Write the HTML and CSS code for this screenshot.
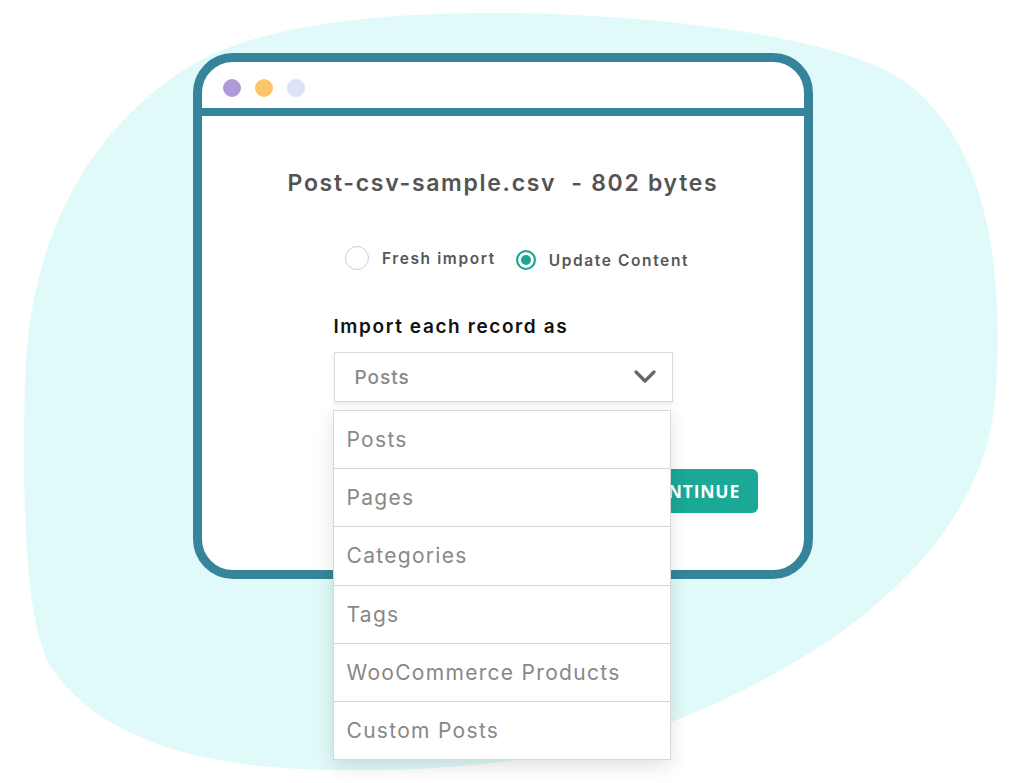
FILE: index.html
```html
<!DOCTYPE html>
<html lang="en">
<head>
    <meta charset="UTF-8">
    <title>CSV import</title>
    <link rel="stylesheet" href="styles.css">
</head>
<body>
    <div class="stage">
        <svg class="blob" width="1024" height="783" viewBox="0 0 1024 783">
            <path d="M512 13 C650 15 850 35 912 87 C990 150 1005 280 995 400 C985 520 880 640 669 723 C560 765 420 772 333 770 C200 768 100 740 50 666 C25 620 22 500 25 383 C28 250 80 130 200 60 C280 20 400 12 512 13 Z" fill="#dffaf8"/>
        </svg>
        <div class="window">
            <div class="titlebar">
                <span class="dot purple"></span>
                <span class="dot yellow"></span>
                <span class="dot blue"></span>
            </div>
            <div class="content">
                <h2 class="file-name">Post-csv-sample.csv &nbsp;- 802 bytes</h2>
                <div class="modes">
                    <label class="radio"><span class="circle"></span>Fresh import</label>
                    <label class="radio checked"><span class="circle"></span>Update Content</label>
                </div>
                <div class="record">
                    <div class="record-label">Import each record as</div>
                    <div class="select">
                        <span>Posts</span>
                        <svg class="chevron" width="22" height="14" viewBox="0 0 22 14">
                            <path d="M2 2 L11 11 L20 2" fill="none" stroke="#666" stroke-width="3.2" stroke-linecap="round" stroke-linejoin="round"/>
                        </svg>
                    </div>
                    <ul class="options">
                        <li>Posts</li>
                        <li>Pages</li>
                        <li>Categories</li>
                        <li>Tags</li>
                        <li>WooCommerce Products</li>
                        <li>Custom Posts</li>
                    </ul>
                </div>
                <div class="actions">
                    <button class="continue">CONTINUE</button>
                </div>
            </div>
        </div>
    </div>
</body>
</html>
```
FILE: styles.css
```css
body {
    margin: 0;
    background: #fff;
    font-family: 'Inter', 'Open Sans', sans-serif;
}
.stage {
    position: relative;
    width: 1024px;
    height: 783px;
    padding-top: 53px;
    box-sizing: border-box;
    overflow: hidden;
}
.blob {
    position: absolute;
    left: 0;
    top: 0;
}
.window {
    position: relative;
    margin-left: 193px;
    width: 620px;
    box-sizing: border-box;
    border: 9px solid #36849b;
    border-radius: 40px;
    background: #fff;
}
.titlebar {
    height: 54px;
    box-sizing: border-box;
    padding: 17px 0 0 21px;
    border-bottom: 8px solid #36849b;
    display: flex;
    gap: 14px;
}
.dot {
    width: 18px;
    height: 18px;
    border-radius: 50%;
}
.dot.purple { background: #b09bd8; }
.dot.yellow { background: #fcc76a; }
.dot.blue { background: #dbe2f8; }
.content {
    padding: 52px 0 57px 0;
}
.file-name {
    margin: 0;
    text-align: center;
    font-size: 23px;
    line-height: 30px;
    font-weight: 600;
    color: #545454;
    letter-spacing: 1.7px;
}
.modes {
    margin-top: 47px;
    height: 26px;
    display: flex;
    justify-content: center;
    align-items: center;
    gap: 20px;
    padding-left: 28px;
}
.radio {
    display: flex;
    align-items: center;
    gap: 13px;
    font-size: 15.5px;
    font-weight: 600;
    color: #575757;
    letter-spacing: 1.6px;
}
.circle {
    width: 22px;
    height: 22px;
    border: 1px solid #cfcfcf;
    border-radius: 50%;
    box-sizing: content-box;
}
.radio.checked .circle {
    width: 16px;
    height: 16px;
    border: 2.5px solid #1ea596;
    background: #1ea596;
    box-shadow: inset 0 0 0 3px #fff;
}
.radio.checked {
    margin-top: 4px;
}
.record {
    position: relative;
    width: 339px;
    margin: 44px auto 0 auto;
}
.record-label {
    font-size: 19px;
    line-height: 24px;
    font-weight: 600;
    color: #111;
    letter-spacing: 1.6px;
}
.select {
    margin-top: 13px;
    height: 50px;
    box-sizing: border-box;
    border: 1px solid #dadada;
    box-shadow: 0 2px 5px rgba(0,0,0,0.08);
    display: flex;
    align-items: center;
    justify-content: space-between;
    padding: 0 16px 0 20px;
    font-size: 19px;
    font-weight: 500;
    color: #8a8a8a;
    letter-spacing: 1px;
}
.options {
    position: absolute;
    left: -1px;
    top: 95px;
    width: 336px;
    margin: 0;
    padding: 0;
    list-style: none;
    background: #fff;
    border: 1px solid #d8d8d8;
    box-shadow: 0 6px 18px rgba(0,0,0,0.12);
    z-index: 2;
}
.options li {
    height: 57.2px;
    display: flex;
    align-items: center;
    padding-left: 13px;
    font-size: 21px;
    color: #888;
    letter-spacing: 1.3px;
}
.options li + li {
    border-top: 1.5px solid #d6d6d6;
}
.actions {
    margin-top: 67px;
    display: flex;
    justify-content: flex-end;
    padding-right: 46px;
}
.continue {
    height: 44px;
    padding: 0 18px 0 22px;
    border: none;
    border-radius: 6px;
    background: #1aa897;
    color: #fff;
    font-family: 'Open Sans', sans-serif;
    font-size: 17.5px;
    font-weight: 700;
    letter-spacing: 0.8px;
}
```
